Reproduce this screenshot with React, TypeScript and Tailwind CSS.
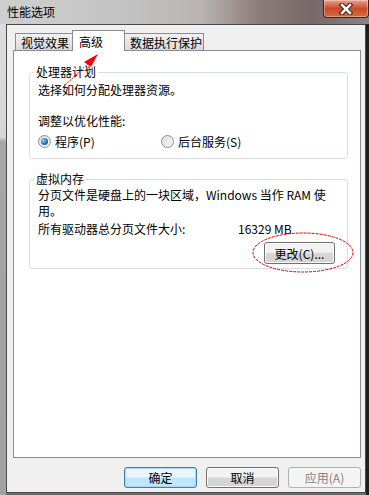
import React from 'react';

const font = "font-['SimSun','Noto_Sans_CJK_SC',sans-serif]";

function Radio({ checked }: { checked?: boolean }) {
  return (
    <span className="relative flex h-[13px] w-[13px] items-center justify-center rounded-full border border-[#8e8f8f] bg-gradient-to-br from-[#dcdcdc] to-[#fafafa]">
      {checked && (
        <span className="h-[7px] w-[7px] rounded-full bg-[radial-gradient(circle_at_35%_35%,#8ad2f6,#1d6fa5_60%,#0e4a78)]" />
      )}
    </span>
  );
}

function Tab({ label, active, w }: { label: string; active?: boolean; w: string }) {
  if (active) {
    return (
      <div className={`relative z-10 -mb-px -mx-[1px] flex h-[21px] items-start justify-start border border-b-0 border-[#898c95] bg-white pl-[6px] pt-[3px] ${w}`}>
        {label}
      </div>
    );
  }
  return (
    <div className={`flex h-[17px] items-center border border-b-0 border-[#898c95] bg-gradient-to-b from-[#f2f2f2] to-[#d9d9d9] pl-[5px] ${w}`}>
      {label}
    </div>
  );
}

export default function App() {
  return (
    <div className={`relative h-[495px] w-[369px] overflow-hidden bg-[#6f6766] text-[12px] leading-[15px] text-black ${font}`}>
      {/* Title bar */}
      <div className="flex h-[24px] items-start justify-between bg-[linear-gradient(90deg,#cfcfcf_0%,#c2c2c2_35%,#b9b3b1_55%,#8c7c79_70%,#77696a_85%,#8a8484_100%)]">
        <span className="pl-[7px] pt-[4px] text-[12px] text-black">性能选项</span>
        <div className="flex h-[18px] w-[46px] items-center justify-center rounded-b-[4px] border border-t-0 border-[#3b2420] bg-gradient-to-b from-[#e8a08e] via-[#c94a2a] to-[#d56a3e] shadow-[inset_0_0_0_1px_rgba(255,255,255,0.35)]">
          <svg width="14" height="12" viewBox="0 0 14 12">
            <path d="M3 2 L11 10 M11 2 L3 10" stroke="#3a1a10" strokeWidth="4.5" strokeLinecap="square" />
            <path d="M3 2 L11 10 M11 2 L3 10" stroke="#ffffff" strokeWidth="2.5" strokeLinecap="square" />
          </svg>
        </div>
      </div>

      {/* Window body */}
      <div className="flex h-[471px]">
        <div className="w-[6px] bg-[linear-gradient(180deg,#dcdcdc_0%,#d6d6d6_24%,#a6a6a6_25%,#a2a2a2_100%)]" />
        <div className="flex h-[469px] w-[360px] flex-col border border-[#4a4a4a] bg-[#f0f0f0] pl-[6px] pr-[4px]">
          {/* Tabs */}
          <div className="mt-[6px] flex h-[19px] items-end pl-[2px]">
            <Tab label="视觉效果" w="w-[58px]" />
            <Tab label="高级" active w="w-[53px]" />
            <Tab label="数据执行保护" w="w-[80px]" />
          </div>

          {/* Panel */}
          <div className="flex h-[408px] flex-col border border-[#898c95] bg-white pl-[15px] pr-[12px]">
            <fieldset className="mt-[13px] rounded-[3px] border border-[#d5dfe5]">
              <legend className="ml-[4px] px-[2px] leading-[16px]">处理器计划</legend>
              <div className="flex flex-col pl-[8px] pb-[9px]">
                <div className="mt-[2px]">选择如何分配处理器资源。</div>
                <div className="mt-[16px]">调整以优化性能:</div>
                <div className="mt-[6px] flex items-center">
                  <Radio checked />
                  <span className="ml-[4px] w-[106px]">程序(P)</span>
                  <Radio />
                  <span className="ml-[4px]">后台服务(S)</span>
                </div>
              </div>
            </fieldset>

            <fieldset className="mt-[12px] rounded-[3px] border border-[#d5dfe5]">
              <legend className="ml-[4px] px-[2px] leading-[16px]">虚拟内存</legend>
              <div className="flex flex-col pl-[8px] pr-[12px] pb-[4px]">
                <div className="whitespace-nowrap leading-[16px]">分页文件是硬盘上的一块区域，Windows 当作 RAM 使</div>
                <div className="leading-[16px]">用。</div>
                <div className="mt-[2px] flex">
                  <span className="w-[200px]">所有驱动器总分页文件大小:</span>
                  <span>16329 MB</span>
                </div>
                <div className="mt-[6px] flex justify-end">
                  <button className="flex h-[22px] w-[71px] items-center justify-center rounded-[3px] border border-[#707070] bg-gradient-to-b from-[#f2f2f2] from-45% to-[#d5d5d5] to-55% shadow-[inset_0_0_0_1px_#fcfcfc]">
                    更改(C)...
                  </button>
                </div>
              </div>
            </fieldset>
          </div>

          {/* Dialog buttons */}
          <div className="mt-[9px] flex justify-end gap-[9px]">
            <button className="flex h-[21px] w-[73px] items-center justify-center rounded-[3px] border border-[#3c7fb1] bg-gradient-to-b from-[#eaf6fd] from-45% to-[#bee6fd] to-55% shadow-[inset_0_0_0_1px_#a7d9f5]">
              确定
            </button>
            <button className="flex h-[21px] w-[73px] items-center justify-center rounded-[3px] border border-[#707070] bg-gradient-to-b from-[#f2f2f2] from-45% to-[#d5d5d5] to-55% shadow-[inset_0_0_0_1px_#fcfcfc]">
              取消
            </button>
            <button className="flex h-[21px] w-[73px] items-center justify-center rounded-[3px] border border-[#adb2b5] bg-[#f4f4f4] text-[#838383]">
              应用(A)
            </button>
          </div>
        </div>
        <div className="w-[3px] bg-[#1e1e1e]" />
      </div>

      {/* Red annotations */}
      <svg className="pointer-events-none absolute left-0 top-0" width="369" height="495">
        <line x1="63" y1="87" x2="92" y2="60" stroke="#ff0000" strokeWidth="1" strokeDasharray="2 1" />
        <polygon points="98,54 84,62 91,67" fill="#ff0000" />
        <ellipse cx="303" cy="252.5" rx="50" ry="19.5" fill="none" stroke="#e00000" strokeWidth="1" strokeDasharray="3 1" />
      </svg>
    </div>
  );
}
